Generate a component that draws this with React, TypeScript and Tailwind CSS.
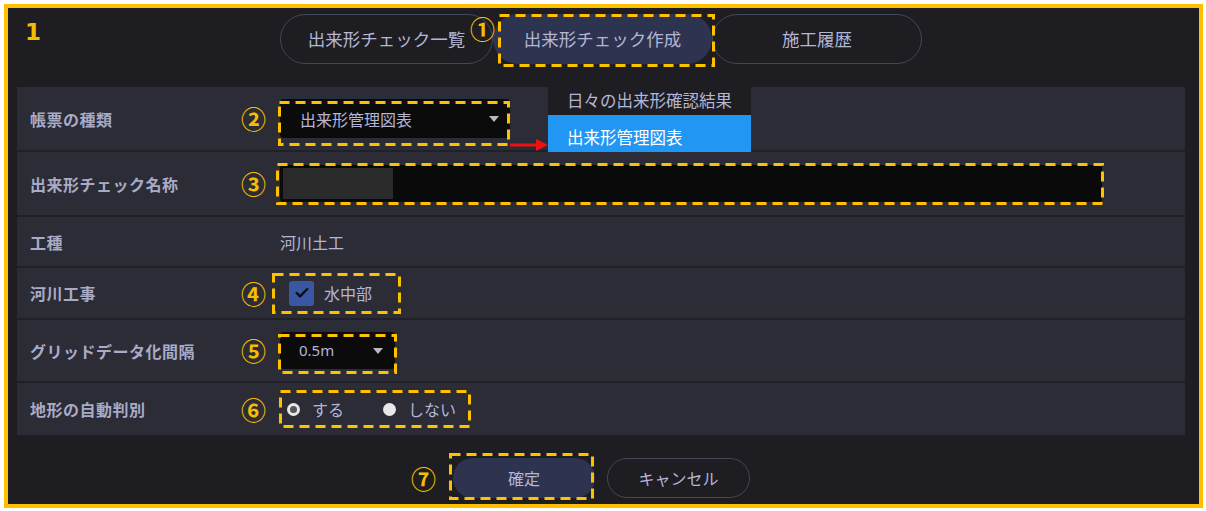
import { Check } from "lucide-react";

const jp = { fontFamily: '"Noto Sans CJK JP", "Noto Sans", sans-serif' };

function Num({ n }: { n: string }) {
  return <span className="w-[39px] shrink-0 text-[25px] font-bold leading-none text-[#f5bd00]">{n}</span>;
}

// yellow dashed annotation frame
function Dash({ className }: { className: string }) {
  return (
    <svg className={`pointer-events-none absolute overflow-visible ${className}`}>
      <rect x="1.5" y="1.5" className="[width:calc(100%-3px)] [height:calc(100%-3px)]" fill="none" stroke="#ffc000" strokeWidth="3" strokeDasharray="10 6" />
    </svg>
  );
}

function Row({ label, num, h, children, last }: { label: string; num?: string; h: string; children?: React.ReactNode; last?: boolean }) {
  return (
    <div className={`flex items-center ${h} ${last ? "" : "border-b-2 border-[#202027]"}`}>
      <span className="w-[224px] shrink-0 pl-[13px] text-[16px] tracking-[0.5px] font-bold text-[#a9abc6]">{label}</span>
      {num ? <Num n={num} /> : <span className="w-[39px] shrink-0" />}
      {children}
    </div>
  );
}

function Caret() {
  return <span className="h-0 w-0 border-x-[5px] border-t-[6px] border-x-transparent border-t-[#b8b8c0]" />;
}

export default function App() {
  return (
    <div className="w-[1206px] h-[511px] bg-white pt-[4px] pl-[4px] pr-[3px] pb-[3px]" style={jp}>
      <div className="relative h-full border-4 border-[#ffc000] bg-[#1d1d22]">
        {/* Header */}
        <div className="flex h-[79px] items-start pl-[17px] pt-[6px]">
          <span className="w-[255px] pt-[7px] text-[23px] font-bold leading-none text-[#f5bd00]" style={{ fontFamily: '"DejaVu Sans", sans-serif' }}>1</span>
          <div className="flex">
            <button className="h-[50px] w-[213px] rounded-full border border-[#44465a] text-[17.5px] text-[#b4b6d6]">出来形チェック一覧</button>
            <button className="h-[50px] w-[219px] rounded-full bg-[#2e3350] text-[17.5px] text-[#b4b6d6]">出来形チェック作成</button>
            <button className="h-[50px] w-[210px] rounded-full border border-[#44465a] text-[17.5px] text-[#b4b6d6]">施工履歴</button>
          </div>
        </div>
        <span className="absolute left-[462px] top-[8px] text-[25px] font-bold leading-none text-[#f5bd00]">①</span>
        <Dash className="left-[490px] top-[6px] h-[53px] w-[217px]" />

        {/* Form panel */}
        <div className="ml-[9px] w-[1168px] bg-[#2b2c36]">
          <Row label="帳票の種類" num="②" h="h-[65px]">
            <div className="relative flex h-[39px] w-[230px] items-center justify-between rounded-[4px] bg-[#0b0b0c] pl-[20px] pr-[11px] text-[16px] text-[#b4b6d6]">
              <span>出来形管理図表</span>
              <Caret />
              <Dash className="-left-[2px] top-[2px] h-[45px] w-[232px]" />
            </div>
          </Row>
          <Row label="出来形チェック名称" num="③" h="h-[65px]">
            <div className="relative flex h-[37px] w-[822px] items-center rounded-[3px] bg-[#0a0a0a] px-[3px]">
              <span className="h-[31px] w-[110px] bg-[#2a2a2a]" />
              <Dash className="-left-[4px] -top-[2px] h-[42px] w-[828px]" />
            </div>
          </Row>
          <Row label="工種" h="h-[51px]">
            <span className="text-[16px] text-[#b4b6d6]">河川土工</span>
          </Row>
          <Row label="河川工事" num="④" h="h-[52px]">
            <div className="relative flex h-[41px] w-[129px] items-center pl-[9px]">
              <span className="flex h-[25px] w-[25px] items-center justify-center rounded-[3px] bg-[#3a57a3]">
                <Check className="h-[16px] w-[16px] text-[#0c0c14]" strokeWidth={3.5} />
              </span>
              <span className="ml-[10px] text-[16px] text-[#b4b6d6]">水中部</span>
              <Dash className="-left-[8px] top-[0px] h-[41px] w-[129px]" />
            </div>
          </Row>
          <Row label="グリッドデータ化間隔" num="⑤" h="h-[63px]">
            <div className="relative flex h-[37px] w-[115px] items-center justify-between rounded-[4px] bg-[#0b0b0c] pl-[19px] pr-[12px] text-[15px] text-[#b4b6d6]" style={{ fontFamily: '"Noto Sans", sans-serif' }}>
              <span>0.5m</span>
              <Caret />
              <Dash className="-left-[2px] top-[2px] h-[40px] w-[119px]" />
            </div>
          </Row>
          <Row label="地形の自動判別" num="⑥" h="h-[52px]" last>
            <div className="relative flex h-[38px] w-[192px] items-center pl-[7px] text-[16px] text-[#b4b6d6]">
              <span className="h-[13px] w-[13px] rounded-full border-[3px] border-[#e6e6e6] bg-[#555]" />
              <span className="ml-[12px]">する</span>
              <span className="ml-[39px] h-[13px] w-[13px] rounded-full bg-[#e8e8e8]" />
              <span className="ml-[12px]">しない</span>
              <Dash className="-left-[1px] top-[0px] h-[38px] w-[192px]" />
            </div>
          </Row>
        </div>

        {/* Footer */}
        <div className="mt-[23px] flex items-center pl-[403px]">
          <span className="w-[42px] text-[25px] font-bold leading-none text-[#f5bd00]">⑦</span>
          <div className="relative">
            <button className="h-[40px] w-[142px] rounded-full bg-[#2e3350] text-[16px] text-[#b4b6d6]">確定</button>
            <Dash className="-left-[4px] -top-[5px] h-[47px] w-[145px]" />
          </div>
          <button className="ml-[12px] h-[40px] w-[143px] rounded-full border border-[#44465a] text-[16px] text-[#b4b6d6]">キャンセル</button>
        </div>

        {/* Dropdown menu */}
        <div className="absolute left-[540px] top-[79px] w-[203px] text-[16.5px]">
          <div className="flex h-[28px] items-center bg-[#1d1d22] pl-[19px] pb-[2px] text-[#b4b6d6]">日々の出来形確認結果</div>
          <div className="flex h-[37px] items-center bg-[#2196f3] pl-[19px] pt-[8px] text-white">出来形管理図表</div>
        </div>

        {/* Red arrow */}
        <svg className="absolute left-[502px] top-[131px]" width="40" height="12" viewBox="0 0 40 12">
          <line x1="0" y1="6" x2="28" y2="6" stroke="#ee1111" strokeWidth="3" />
          <polygon points="26,0 38,6 26,12" fill="#ee1111" />
        </svg>
      </div>
    </div>
  );
}
